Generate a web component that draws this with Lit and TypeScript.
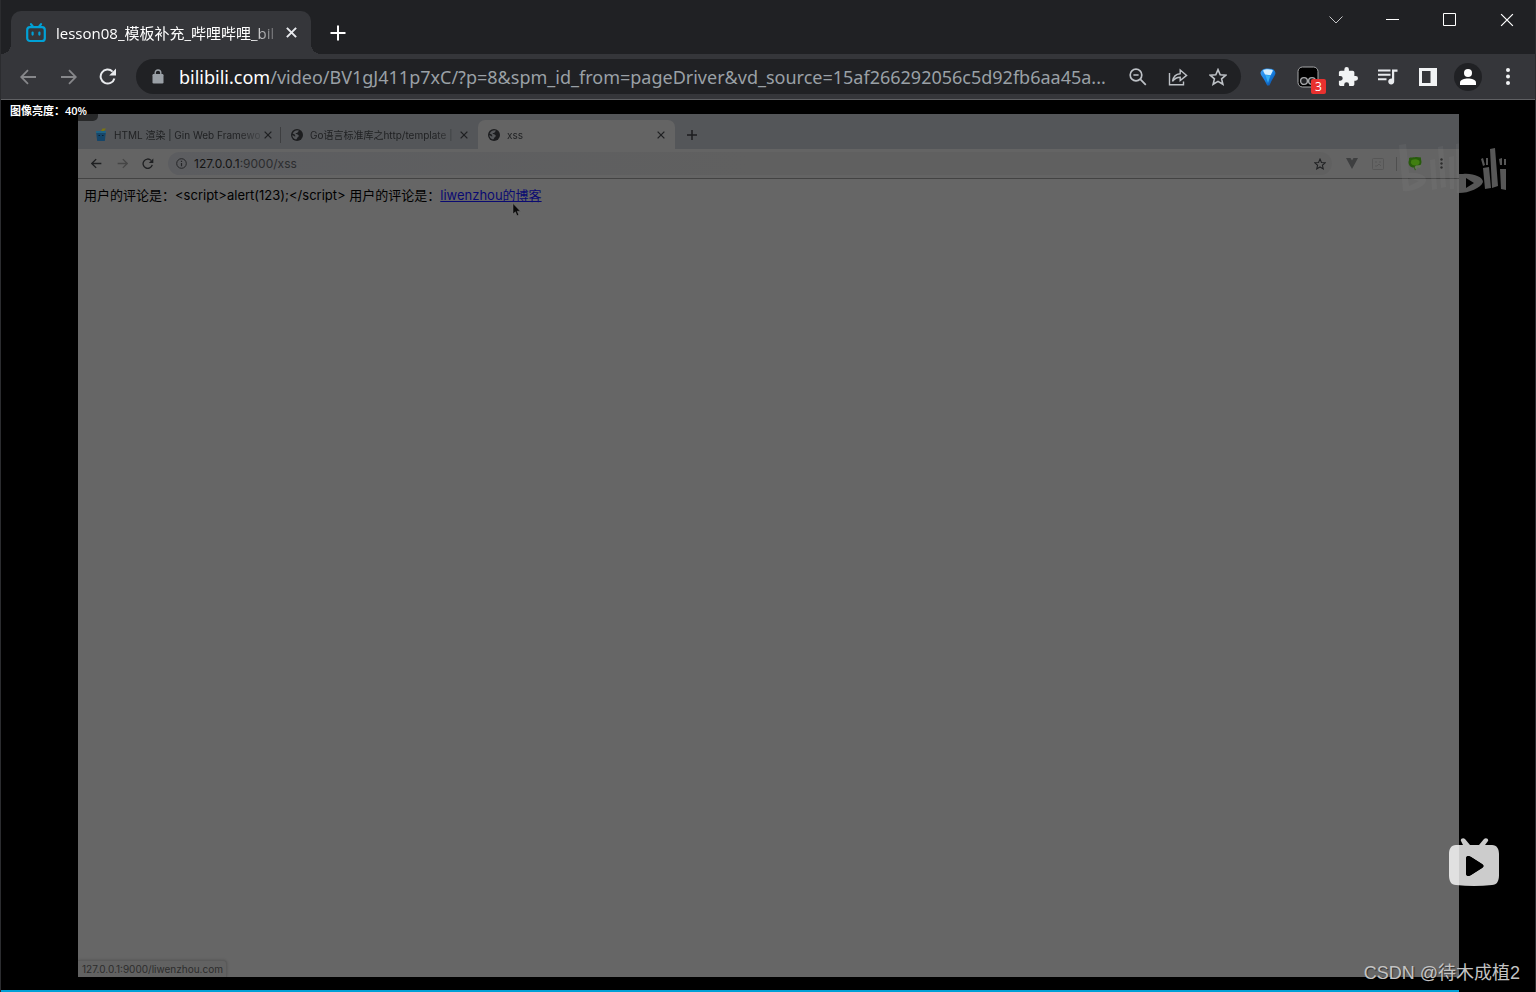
import { LitElement, html, css, svg } from "lit";
import { customElement } from "lit/decorators.js";

const globe = html`<svg class="globe" viewBox="0 0 12 12" width="12" height="12" aria-hidden="true">
  <circle cx="6" cy="6" r="6" fill="#1c1d1f"></circle>
  <path d="M5 1.4 7.6 1.3C8 2.6 6.6 3 6.4 3.8 5.8 4.2 5 3.8 4.6 4.6 4.6 5.4 6 5 6.6 5.6 7.2 6.2 8 6.2 7.8 7.2 7.2 8 6.2 8.2 6 9.6L5.2 10.6C3 10.3 1.3 8.3 1.3 6L3.8 7.6 4.6 7.2 3.2 5 1.6 4.8C2.2 3 3.4 1.8 5 1.4Z" fill="#55575a"></path>
</svg>`;

const cross = (size: number, w: number) => html`<svg viewBox="0 0 10 10" width=${size} height=${size} fill="none" stroke="currentColor" stroke-width=${w} aria-hidden="true"><path d="M.8 .8 9.2 9.2M9.2 .8 .8 9.2"></path></svg>`;

const arrow = svg`<path d="M16 8H1.6M8 1.2 1.2 8 8 14.8"></path>`;

const reload = svg`<path d="M15.4 10.4A7 7 0 1 1 13.6 3.6" fill="none" stroke="currentColor" stroke-width="2"></path><path d="M17 .6V7.4H10.2Z" fill="currentColor"></path>`;

const starPath = svg`<path d="M9 1.6 11.2 6.7 16.8 7.2 12.6 10.9 13.9 16.3 9 13.4 4.1 16.3 5.4 10.9 1.2 7.2 6.8 6.7Z" fill="none" stroke="currentColor" stroke-width="1.6"></path>`;

@customElement("browser-chrome")
export class BrowserChrome extends LitElement {
  static styles = css`
    :host { display: block; background: #35363a; color: #e8eaed; font-family: "Open Sans", "Noto Sans CJK SC", sans-serif; border-bottom: 1px solid #5f6063; }
    button { all: unset; display: flex; align-items: center; justify-content: center; flex: none; box-sizing: border-box; }
    svg { display: block; }
    .strip { display: flex; height: 54px; background: #202124; padding-left: 10px; }
    .tab { position: relative; display: flex; align-items: center; box-sizing: border-box; width: 300px; height: 43px; margin-top: 11px; padding: 0 12px 0 15px; background: #35363a; border-radius: 10px 10px 0 0; gap: 10px; }
    .tab::before, .tab::after { content: ""; position: absolute; bottom: 0; width: 10px; height: 10px; }
    .tab::before { right: 100%; background: radial-gradient(circle at 0 0, transparent 10px, #35363a 10px); }
    .tab::after { left: 100%; background: radial-gradient(circle at 100% 0, transparent 10px, #35363a 10px); }
    .title { flex: 1; min-width: 0; white-space: nowrap; font-size: 15px; line-height: 22px; color: #fff; mask-image: linear-gradient(90deg, #000 195px, transparent 226px); }
    .close { width: 16px; height: 16px; }
    .plus { width: 34px; height: 43px; margin: 11px 0 0 10px; }
    .controls { display: flex; margin-left: auto; height: 39px; }
    .controls button { width: 57px; color: #fff; }
    .bar { display: flex; align-items: center; height: 45px; padding: 0 7px; }
    .bar > button { width: 40px; height: 40px; }
    .bar > .dim { color: #86878a; }
    .address { display: flex; align-items: center; flex: 1; min-width: 0; height: 35px; margin: 0 7px 0 8px; padding: 0 3px 0 16px; border-radius: 18px; background: #202124; color: #9aa0a6; }
    .address button { width: 40px; height: 35px; color: #bdc1c6; }
    .address label { margin-left: 15px; color: #fff; }
    .address label, .address input { font: 18px/28px "Noto Sans", sans-serif; }
    .address input { flex: 1; min-width: 0; border: 0; padding: 0; background: none; color: #9aa0a6; outline: 0; }
    .ext { position: relative; }
    .badge { position: absolute; left: 23px; top: 22px; width: 15px; height: 15px; border-radius: 2px; background: #e8312f; color: #fff; font-size: 12px; line-height: 15px; text-align: center; }
    .avatar i { display: flex; align-items: center; justify-content: center; width: 28px; height: 28px; border-radius: 50%; background: #202124; }
  `;

  render() {
    return html`
      <div class="strip">
        <div class="tab">
          <svg viewBox="0 0 20 20" width="20" height="20" fill="none" stroke="#00a1d6" stroke-width="2.2" stroke-linecap="round" aria-hidden="true">
            <rect x="1.2" y="4.2" width="17.6" height="13.8" rx="2.8"></rect><path d="M5 1.2 7 3.6M15 1.2 13 3.6M6.6 9.6V11.6M13.4 9.6V11.6"></path>
          </svg>
          <span class="title">lesson08_模板补充_哔哩哔哩_bil</span>
          <button class="close" aria-label="关闭标签页">${cross(11, 1.8)}</button>
        </div>
        <button class="plus" aria-label="新标签页"><svg viewBox="0 0 16 16" width="16" height="16" stroke="#fff" stroke-width="2"><path d="M8 .5V15.5M.5 8H15.5"></path></svg></button>
        <div class="controls">
          <button aria-label="搜索标签页"><svg viewBox="0 0 14 8" width="14" height="8" fill="none" stroke="#c4c5c7"><path d="M.5 .5 7 7 13.5 .5"></path></svg></button>
          <button aria-label="最小化"><svg viewBox="0 0 13 13" width="13" height="13"><path d="M0 6H13V7H0Z" fill="#fff"></path></svg></button>
          <button aria-label="最大化"><svg viewBox="0 0 13 13" width="13" height="13" fill="none" stroke="#fff"><path d="M.5 .5H12.5V12.5H.5Z"></path></svg></button>
          <button aria-label="关闭">${cross(14, 0.9)}</button>
        </div>
      </div>
      <div class="bar">
        <button class="dim" aria-label="后退"><svg viewBox="0 0 17 16" width="17" height="16" fill="none" stroke="currentColor" stroke-width="1.8">${arrow}</svg></button>
        <button class="dim" aria-label="前进"><svg viewBox="0 0 17 16" width="17" height="16" fill="none" stroke="currentColor" stroke-width="1.8"><g transform="matrix(-1 0 0 1 17 0)">${arrow}</g></svg></button>
        <button aria-label="重新加载"><svg viewBox="0 0 18 18" width="18" height="18">${reload}</svg></button>
        <div class="address">
          <svg viewBox="0 0 12 15" width="12" height="15" aria-hidden="true"><rect x=".5" y="5" width="11" height="9.5" rx="1.2" fill="#9aa0a6"></rect><path d="M3.2 6V3.8A2.8 2.8 0 0 1 8.8 3.8V6" fill="none" stroke="#9aa0a6" stroke-width="1.4"></path></svg>
          <label for="url">bilibili.com</label><input id="url" value="/video/BV1gJ411p7xC/?p=8&spm_id_from=pageDriver&vd_source=15af266292056c5d92fb6aa45a..." />
          <button aria-label="缩放"><svg viewBox="0 0 18 18" width="18" height="18" fill="none" stroke="currentColor" stroke-width="1.7"><circle cx="7" cy="7" r="5.8"></circle><path d="M11.2 11.2 16.8 16.8M4.4 7H9.6"></path></svg></button>
          <button aria-label="分享"><svg viewBox="0 0 20 18" width="20" height="18" fill="none" stroke="currentColor" stroke-width="1.4"><path d="M1.5 5V16.8H15.5V13.5M4.5 13.4C5.2 8.8 8 6 12.2 5.7V2L18.6 7.4 12.2 12.6V9.2C8.8 9.2 6.6 10.4 4.5 13.4Z"></path></svg></button>
          <button aria-label="收藏"><svg viewBox="0 0 18 18" width="18" height="18">${starPath}</svg></button>
        </div>
        <button aria-label="扩展程序">
          <svg viewBox="0 0 16 18" width="16" height="18"><defs><linearGradient id="gem" x1="0" y1="0" x2="1" y2="1"><stop offset="0" stop-color="#3d9df0"></stop><stop offset=".5" stop-color="#1784e8"></stop><stop offset="1" stop-color="#0a3c86"></stop></linearGradient></defs><path d="M.5 5C1 1.6 4 .4 8 .4S15 1.6 15.5 5C15.4 7.4 13 9.4 9.4 17.6H7.2C4 10 .8 8 .5 5Z" fill="url(#gem)"></path><path d="M3 2.4C5 .8 11 .8 13 2.4L10.6 7.2 5 6.6Z" fill="#d4efff"></path><path d="M5.4 7 10.4 7.4 8 15Z" fill="#35b0f4"></path></svg>
        </button>
        <button class="ext" aria-label="脚本管理器">
          <svg viewBox="0 0 22 22" width="22" height="22" fill="none" stroke="#a6a7a9"><rect x="1" y="1" width="20" height="20" rx="4.5" fill="#000"></rect><circle cx="7" cy="15" r="3.4" fill="#202124" stroke-width="1.4"></circle><circle cx="15" cy="15" r="3.4" fill="#202124" stroke-width="1.4"></circle></svg>
          <span class="badge">3</span>
        </button>
        <button aria-label="扩展"><svg viewBox="1 1 22 22" width="20" height="20"><path d="M20.5 11H19V7c0-1.1-.9-2-2-2h-4V3.5a2.5 2.5 0 0 0-5 0V5H4c-1.1 0-2 .9-2 2v3.8h1.5a2.7 2.7 0 0 1 0 5.4H2V20c0 1.1.9 2 2 2h3.800v-1.500a2.700 2.700 0 0 1 5.400 0V22H17c1.100 0 2-.9 2-2v-4h1.500a2.500 2.500 0 0 0 0-5Z" fill="#f1f3f4"></path></svg></button>
        <button aria-label="媒体控制"><svg viewBox="0 0 20 16" width="20" height="16"><path d="M0 .5H12.500V2.500H0ZM0 4.800H12.500V6.800H0ZM0 9.200H8.500V11.200H0ZM14 .5H19.500V2.800H16.200V12.200A3 3 0 1 1 14 9.600Z" fill="#e8eaed"></path></svg></button>
        <button aria-label="侧边栏"><svg viewBox="0 0 18 18" width="18" height="18"><path d="M0 0H18V18H0ZM3 3V15H11.500V3Z" fill="#f1f3f4" fill-rule="evenodd"></path></svg></button>
        <button class="avatar" aria-label="个人资料"><i><svg viewBox="0 0 16 16" width="16" height="16" fill="#fff"><circle cx="8" cy="4" r="4"></circle><path d="M0 16V13.500C0 11 4.500 9.600 8 9.600S16 11 16 13.500V16Z"></path></svg></i></button>
        <button aria-label="菜单"><svg viewBox="0 0 4 17" width="4" height="17" fill="#f1f3f4"><circle cx="2" cy="2" r="2"></circle><circle cx="2" cy="8.500" r="2"></circle><circle cx="2" cy="15" r="2"></circle></svg></button>
      </div>
    `;
  }
}

@customElement("recorded-page")
export class RecordedPage extends LitElement {
  static styles = css`
    :host { position: relative; display: flex; flex-direction: column; min-width: 0; background: #666; color: #1f2022; font-family: Inter, "Noto Sans CJK SC", sans-serif; }
    button { all: unset; display: flex; align-items: center; justify-content: center; flex: none; }
    svg { display: block; flex: none; }
    .strip { display: flex; align-items: center; height: 35px; padding-left: 6px; background: #545659; }
    .tab { display: flex; align-items: center; box-sizing: border-box; width: 197px; height: 29px; margin-top: 6px; padding: 0 8px 0 10px; gap: 7px; }
    .tab.first { border-right: 1px solid #3d3e40; height: 16px; margin-top: 6px; padding: 0 6px 0 11px; }
    .tab.current { background: #646464; border-radius: 7px 7px 0 0; }
    .title { flex: 1; min-width: 0; margin-right: -6px; white-space: nowrap; font-size: 10px; line-height: 16px; mask-image: linear-gradient(90deg, #000 124px, transparent 154px); }
    .tab button { width: 12px; height: 16px; }
    .plus { width: 34px; height: 24px; margin-top: 6px; }
    .bar { display: flex; align-items: center; height: 29px; padding: 0 5px; background: #646464; border-bottom: 1px solid #434343; }
    .bar > button { width: 26px; height: 26px; }
    .bar > .dim { color: #464646; }
    .address { display: flex; align-items: center; flex: 1; min-width: 0; height: 23px; margin-left: 7px; padding: 0 0 0 8px; border-radius: 12px; background: linear-gradient(90deg, #5c5d60, #606060 50%); }
    .address label { margin-left: 7px; color: #141414; }
    .address label, .address input { font: 12px/16px Inter, sans-serif; }
    .address input { flex: 1; min-width: 0; border: 0; padding: 0; background: none; color: #2b2c2e; outline: 0; }
    .address button { width: 24px; height: 23px; }
    .tools { display: flex; align-items: center; padding-left: 7px; }
    .tools button { width: 26px; height: 26px; }
    .tools .sep { width: 1px; height: 14px; margin: 0 5px; background: #4f4f4f; }
    .content { flex: 1; padding: 6px; font-size: 13px; line-height: 20px; color: #000; }
    .content p { margin: 0; }
    .content a { color: #0a0a72; text-decoration: underline; }
    .status { align-self: flex-start; padding: 0 3px 0 4px; background: #626262; border: 1px solid #5a5a5a; border-width: 1px 1px 0 0; border-radius: 0 4px 0 0; box-shadow: 0 0 3px #0003; color: #2c2c2c; font-size: 10px; line-height: 16px; }
    .pointer { position: absolute; left: 434px; top: 89px; }
  `;

  render() {
    return html`
      <div class="strip">
        <div class="tab first">
          <svg viewBox="0 0 12 13" width="12" height="13" aria-hidden="true"><path d="M6 3 7.500 .6 11 .4 9 3Z" fill="#7b7414"></path><path d="M1 3H11L9.800 13H2.200Z" fill="#15466a"></path><path d="M1 3H11V5H1Z" fill="#206384"></path><path d="M3.500 7.500H5M7 7.500H8.500" stroke="#0c2030"></path></svg>
          <span class="title">HTML 渲染 | Gin Web Framewo</span>
          <button aria-label="关闭">${cross(8, 1.6)}</button>
        </div>
        <div class="tab">${globe}<span class="title">Go语言标准库之http/template |</span><button aria-label="关闭">${cross(8, 1.6)}</button></div>
        <div class="tab current">${globe}<span class="title">xss</span><button aria-label="关闭">${cross(8, 1.6)}</button></div>
        <button class="plus" aria-label="新标签页"><svg viewBox="0 0 10 10" width="10" height="10" stroke="#1c1d1f" stroke-width="1.500"><path d="M5 0V10M0 5H10"></path></svg></button>
      </div>
      <div class="bar">
        <button aria-label="后退"><svg viewBox="0 0 17 16" width="11" height="11" fill="none" stroke="currentColor" stroke-width="2">${arrow}</svg></button>
        <button class="dim" aria-label="前进"><svg viewBox="0 0 17 16" width="11" height="11" fill="none" stroke="currentColor" stroke-width="2"><g transform="matrix(-1 0 0 1 17 0)">${arrow}</g></svg></button>
        <button aria-label="重新加载"><svg viewBox="0 0 18 18" width="12" height="12">${reload}</svg></button>
        <div class="address">
          <svg viewBox="0 0 11 11" width="11" height="11" fill="none" stroke="#252628" aria-hidden="true"><circle cx="5.500" cy="5.500" r="4.800"></circle><path d="M5.500 5V8.200M5.500 2.800V4" stroke-width="1.200"></path></svg>
          <label for="page-url">127.0.0.1</label><input id="page-url" value=":9000/xss" />
          <button aria-label="收藏"><svg viewBox="0 0 18 18" width="12" height="12">${starPath}</svg></button>
        </div>
        <div class="tools">
          <button aria-label="Vue"><svg viewBox="0 0 12 11" width="12" height="11"><path d="M0 0H4.500L6 2.600 7.500 0H12L6 11Z" fill="#3e3f40"></path></svg></button>
          <button aria-label="扩展"><svg viewBox="0 0 12 12" width="12" height="12" fill="none" stroke="#565656"><rect x=".5" y=".5" width="11" height="11" rx="1"></rect><path d="M3 4H5M7 4H9M3 8H5L7 6 9 8"></path></svg></button>
          <span class="sep"></span>
          <button aria-label="个人资料"><svg viewBox="0 0 14 15" width="14" height="15"><path d="M1 2C3 1 5 1.500 7 1.200 9 .8 11 1.500 13 1.500 12.500 3 13.800 5 13.400 7 13 9 11.500 10 10 11L7 14.500 6 11.500C3 11.500 .6 9.500 .5 6.500 .5 5 1.500 4 1 2Z" fill="#275c0b"></path><path d="M3.500 4C6 2.800 9 3 11 4.500 12.500 6.500 11 9 8.500 9.500 5.500 10 3 8.500 2.800 6.500Z" fill="#417f10"></path><path d="M6.500 11 8 9.500 13 9 12 12 10 11.500 8 14Z" fill="#68745c"></path></svg></button>
          <button aria-label="菜单"><svg viewBox="0 0 3 11" width="3" height="11" fill="#1c1c1c"><circle cx="1.500" cy="1.500" r="1.200"></circle><circle cx="1.500" cy="5.500" r="1.200"></circle><circle cx="1.500" cy="9.500" r="1.200"></circle></svg></button>
        </div>
      </div>
      <div class="content"><p>用户的评论是：&lt;script&gt;alert(123);&lt;/script&gt; 用户的评论是：<a href="#">liwenzhou的博客</a></p></div>
      <div class="status">127.0.0.1:9000/liwenzhou.com</div>
      <svg class="pointer" viewBox="0 0 9 14" width="9" height="14" aria-hidden="true"><path d="M1 .5V11L3.400 8.800 5 12.800 6.800 12 5.200 8.200H8.400Z" fill="#0a0a0a" stroke="#777" stroke-width=".5"></path></svg>
    `;
  }
}

@customElement("app-root")
export class AppRoot extends LitElement {
  static styles = css`
    :host { display: flex; flex-direction: column; height: 100vh; box-sizing: border-box; border-left: 1px solid #2b2c2f; border-right: 1px solid #2b2c2f; background: #000; font-family: "Open Sans", "Noto Sans CJK SC", sans-serif; }
    .player { position: relative; flex: 1; min-height: 0; display: flex; padding: 14px 76px 15px 77px; }
    recorded-page { flex: 1; }
    .hint { position: absolute; left: 0; top: 0; box-sizing: border-box; width: 97px; padding: 3px 9px 2px; border-radius: 0 0 5px 0; background: #0008; color: #fff; font-weight: 600; font-size: 11px; line-height: 16px; white-space: nowrap; }
    .logo { position: absolute; right: 26px; top: 43px; }
    .play { all: unset; position: absolute; right: 35px; bottom: 104px; }
    .play svg { display: block; }
    .credit { position: absolute; right: 15px; bottom: 6px; color: #c4c4c4; font: 18px/26px "Liberation Sans", "Noto Sans CJK SC", sans-serif; text-shadow: 1px 1px 1px #0008; }
    .progress { position: absolute; left: 0; right: 76px; bottom: 0; height: 2px; background: #00a1d6; }
  `;

  render() {
    const stem = svg`<path d="M59 1 64 0 66 31C76 30 86 34 86 39 84 45 72 51 60 50ZM69 35V45L77 40Z" fill-rule="evenodd"></path>`;
    return html`
      <browser-chrome></browser-chrome>
      <main class="player">
        <recorded-page></recorded-page>
        <div class="hint">图像亮度：40%</div>
        <svg class="logo" viewBox="0 0 112 52" width="112" height="52" aria-hidden="true">
          <clipPath id="over-page"><path d="M0 0H62V52H0Z"></path></clipPath>
          <clipPath id="over-black"><path d="M62 0H112V52H62Z"></path></clipPath>
          <g fill="#888" opacity=".15" clip-path="url(#over-page)">
            <path d="M2 2 9 1 12 30C22 29 30 33 29 38 27 44 16 49 6 48ZM11 35 12 43 22 38ZM33 17 38 16 40 46 35 47ZM41 4 46 3 49 44 44 45ZM52 14 57 13 57 46 53 46Z"></path>
            ${stem}
          </g>
          <g fill="#575757" clip-path="url(#over-black)">
            <path d="M62 31H66C76 30 86 34 86 39 84 45 72 50 62 50ZM69 35V45L77 40Z" fill-rule="evenodd"></path>
            <path d="M86 25 92 24 94 45 88 46ZM93 6 98 5 101 43 95 45ZM103 26 109 26 109 47 104 46ZM84 16 86 15 88 22 86 23ZM89 15 91 15 91 22 89 22ZM102 16 105 15 105 22 103 22ZM107 16 109 16 109 22 107 22Z"></path>
          </g>
        </svg>
        <button class="play" aria-label="播放"><svg viewBox="0 0 52 50" width="52" height="50"><g fill="#fff" opacity=".8"><path d="M8 7H15L13 3C12 1 15-1 17 1L22 7H31L36 1C38-1 41 1 40 3L37 7H44C49 7 51 11 51 16V37C51 43 49 47 44 47Q26 49 8 47C3 47 1 43 1 37V16C1 11 3 7 8 7ZM18 21V35C18 38 20 39 23 37L34 30Q37 28 34 26L23 19C20 17 18 18 18 21Z" fill-rule="evenodd"></path></g><path d="M18 21V35C18 38 20 39 23 37L34 30Q37 28 34 26L23 19C20 17 18 18 18 21Z" fill="#000"></path></svg></button>
        <div class="credit">CSDN @待木成植2</div>
        <div class="progress"></div>
      </main>
    `;
  }
}
